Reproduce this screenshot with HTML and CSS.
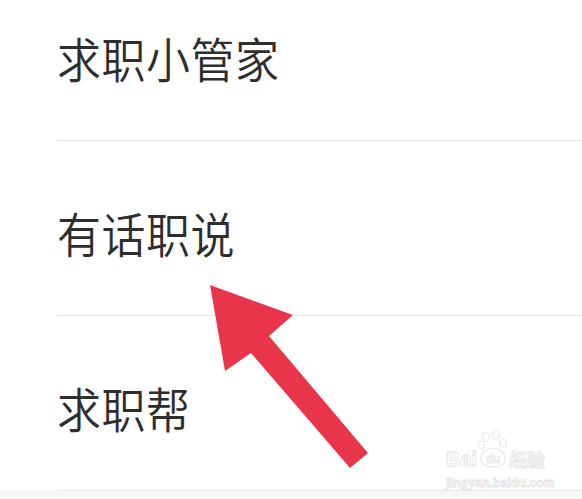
FILE: index.html
```html
<!DOCTYPE html>
<html>
<head>
    <title>求职</title>
    <link rel="stylesheet" href="styles.css">
</head>
<body>
    <ul class="menu">
        <li class="menu-item"><span class="label">求职小管家</span></li>
        <li class="menu-item"><span class="label">有话职说</span></li>
        <li class="menu-item"><span class="label">求职帮</span></li>
    </ul>
    <div class="footer"></div>

    <!-- annotation arrow -->
    <svg class="arrow" width="582" height="499" viewBox="0 0 582 499">
        <polygon points="210,285 293,315 269,336 368,453 350,468 251,353 225,371" fill="#e8354a"/>
    </svg>

    <div class="watermark">
        <div class="wm-top">
            <span class="wm-bai">Bai</span>
            <span class="wm-paw">
                <svg width="30" height="38" viewBox="0 0 30 38">
                    <ellipse cx="8" cy="6" rx="3.5" ry="4.5" fill="none" stroke="#e6e6e6" stroke-width="1.2"/>
                    <ellipse cx="18" cy="4" rx="3.5" ry="4" fill="none" stroke="#e6e6e6" stroke-width="1.2"/>
                    <ellipse cx="3.5" cy="14" rx="3" ry="4" fill="none" stroke="#e6e6e6" stroke-width="1.2"/>
                    <ellipse cx="25" cy="12" rx="3" ry="4" fill="none" stroke="#e6e6e6" stroke-width="1.2"/>
                    <path d="M3 28 C3 20 10 17 15 17 C20 17 27 20 27 28 C27 34 20 36 15 36 C10 36 3 34 3 28 Z" fill="none" stroke="#e6e6e6" stroke-width="1.2"/>
                    <text x="15" y="32" text-anchor="middle" font-family="Liberation Sans, sans-serif" font-size="12" font-weight="bold" fill="#ffffff" stroke="#e6e6e6" stroke-width="0.8">du</text>
                </svg>
            </span>
            <span class="wm-jy">经验</span>
        </div>
        <div class="wm-url">jingyan.baidu.com</div>
    </div>
</body>
</html>
```

FILE: styles.css
```css
/* page base */
body {
    margin: 0;
    height: 499px;
    overflow: hidden;
    background-color: #ffffff;
    font-family: "Noto Sans CJK SC", "Noto Sans", sans-serif;
    position: relative;
}

/* list of entries */
.menu {
    list-style: none;
    margin: -34px 0 0 0;
    padding: 0 0 0 57px;
}

.menu-item {
    height: 175px;
    box-sizing: border-box;
    border-bottom: 1px solid #e8e8e8;
    display: flex;
    align-items: center;
    padding-top: 8px;
    font-size: 44px;
    font-weight: 350;
    color: #2e2e2e;
    letter-spacing: 0.5px;
}

/* glyphs in the shot are a bit taller than wide */
.label {
    display: inline-block;
    transform: scaleY(1.08);
}

/* grey strip under the list */
.footer {
    height: 20px;
    background-color: #f7f7f7;
}

/* red annotation arrow lies over the list */
.arrow {
    position: absolute;
    top: 0;
    left: 0;
}

/* baidu jingyan watermark, outlined letters */
.watermark {
    position: absolute;
    left: 446px;
    top: 433px;
    color: #ffffff;
    -webkit-text-stroke: 0.8px #e2e2e2;
    font-family: "Liberation Sans", sans-serif;
}

.wm-top {
    display: flex;
    align-items: flex-end;
    height: 36px;
}

.wm-bai {
    font-size: 20px;
    font-weight: bold;
    line-height: 20px;
}

.wm-paw {
    display: flex;
    margin: 0 1px;
    -webkit-text-stroke: 0;
}

.wm-jy {
    font-family: "Noto Sans CJK SC", sans-serif;
    font-size: 18px;
    font-weight: bold;
    line-height: 20px;
}

.wm-url {
    font-size: 12px;
    font-weight: bold;
    margin-top: 7px;
    letter-spacing: 0.2px;
}
```
